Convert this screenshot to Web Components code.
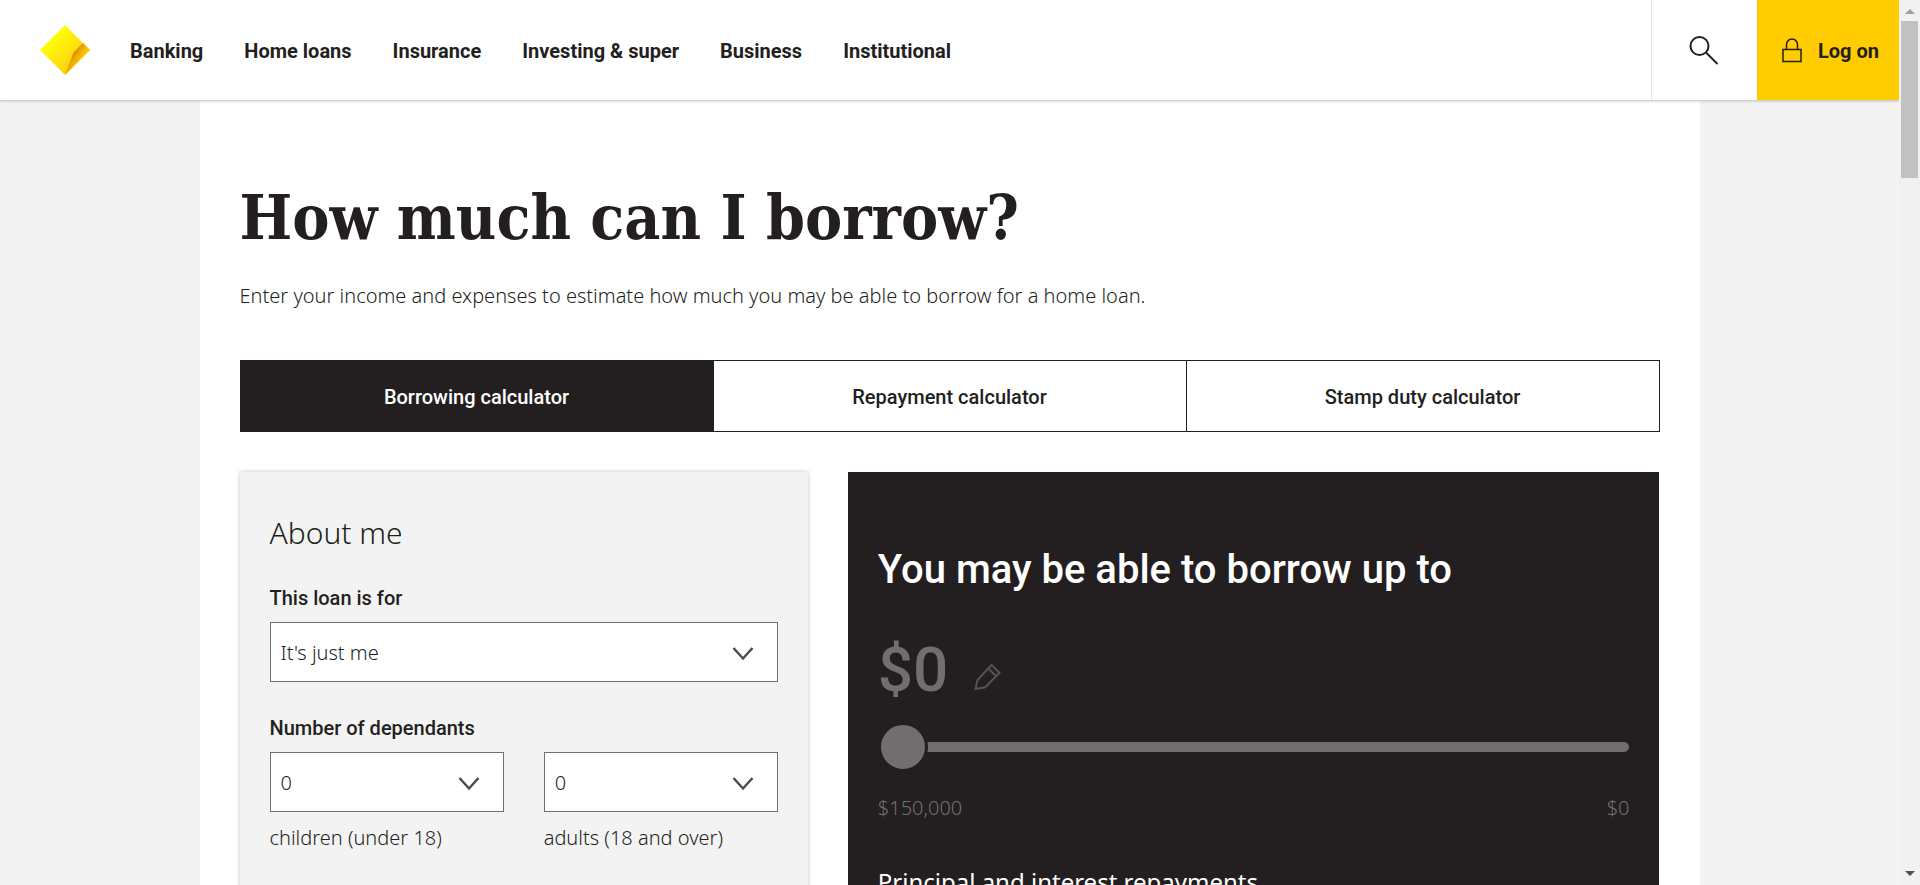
<!DOCTYPE html>
<html lang="en">
<head>
<meta charset="utf-8">
<title>How much can I borrow?</title>
<style>
  html, body { margin: 0; height: 100%; }
  body {
    --ink: #231f20;
    --mist: #f3f3f3;
    --sun: #fc0;
    --grey: #716e6f;
    --ui: Roboto, "Liberation Sans", sans-serif;
    --text: "Noto Sans", "Open Sans", sans-serif;
    font: 300 20px/28px var(--text);
    color: var(--ink);
  }
</style>
</head>
<body>
<app-shell>
  <site-header slot="header">
    <nav-link href="#banking">Banking</nav-link>
    <nav-link href="#home-loans">Home loans</nav-link>
    <nav-link href="#insurance">Insurance</nav-link>
    <nav-link href="#investing">Investing &amp; super</nav-link>
    <nav-link href="#business">Business</nav-link>
    <nav-link href="#institutional">Institutional</nav-link>
  </site-header>
  <page-intro>
    <span slot="title">How much can I borrow?</span>
    Enter your income and expenses to estimate how much you may be able to borrow for a home loan.
  </page-intro>
  <calc-tabs>
    <calc-tab selected>Borrowing calculator</calc-tab>
    <calc-tab>Repayment calculator</calc-tab>
    <calc-tab>Stamp duty calculator</calc-tab>
  </calc-tabs>
  <calc-columns>
    <about-form slot="form"></about-form>
    <borrow-result slot="result"></borrow-result>
  </calc-columns>
</app-shell>

<script>
function define(name, html, setup) {
  const template = document.createElement('template');
  template.innerHTML = html;
  customElements.define(name, class extends HTMLElement {
    connectedCallback() {
      if (this.shadowRoot) return;
      const root = this.attachShadow({ mode: 'open' });
      root.append(template.content.cloneNode(true));
      if (setup) setup(this, root);
    }
  });
}

/* Scrolling page beside its scroll bar */
define('app-shell', `
<style>
  :host { display: flex; height: 100vh; background: var(--mist); }
  .pane { flex: 1; min-width: 0; overflow-y: auto; scrollbar-width: none; }
  main { box-sizing: border-box; max-width: 1500px; margin: 0 auto; padding: 81px 40px; background: #fff; }
</style>
<div class="pane">
  <slot name="header"></slot>
  <main><slot></slot></main>
</div>
<scroll-rail></scroll-rail>`);

define('scroll-rail', `
<style>
  :host { display: flex; flex-direction: column; align-items: center; box-sizing: border-box; width: 21px; padding: 9px 2px; background: #f1f1f1; }
  svg { flex: none; display: block; }
  .rail { flex: 1; width: 17px; padding-top: 7px; }
  .thumb { height: 157px; background: #c1c1c1; }
</style>
<svg width="10" height="5" viewBox="0 0 10 5" aria-hidden="true"><path d="M5 0 10 5H0z" fill="#a0a0a0"/></svg>
<div class="rail"><div class="thumb"></div></div>
<svg width="10" height="5" viewBox="0 0 10 5" aria-hidden="true"><path d="M0 0H10L5 5z" fill="#505050"/></svg>`);

define('site-header', `
<style>
  :host { display: block; position: relative; z-index: 1; }
  header { display: flex; height: 100px; background: #fff; border-bottom: 1px solid #d0d0d0; box-shadow: 0 1px 2px rgba(0,0,0,.12); }
  .logo { display: flex; align-items: center; padding: 0 40px; }
  nav { display: flex; align-items: center; gap: 41px; flex: 1; }
  button { border: 0; background: none; color: var(--ink); cursor: pointer; }
  .search { width: 106px; padding: 0; border-left: 1px solid #e6e6e6; display: grid; place-items: center; }
  .logon { display: flex; align-items: center; gap: 16px; padding: 0 20px 0 25px; background: var(--sun); font: 700 20px/24px var(--ui); }
  .logon span { padding-top: 2px; }
  svg { display: block; }
</style>
<header>
  <a class="logo" href="#home" aria-label="Home">
    <svg width="50" height="50" viewBox="0 0 50 50">
      <defs>
        <linearGradient id="face" x1="12" y1="12" x2="38" y2="38" gradientUnits="userSpaceOnUse">
          <stop offset="0" stop-color="#ffff05"/><stop offset=".3" stop-color="#fff00d"/><stop offset="1" stop-color="#fdcf12"/>
        </linearGradient>
        <linearGradient id="fold" x1="31" y1="28" x2="41" y2="35" gradientUnits="userSpaceOnUse">
          <stop offset="0" stop-color="#c27a00"/><stop offset=".45" stop-color="#e9a400"/><stop offset="1" stop-color="#ffc900"/>
        </linearGradient>
      </defs>
      <path d="M25 0 50 25 25 50 0 25z" fill="url(#face)"/>
      <path d="M43 18 35 26Q33.600 27.500 33 29L25 50 50 25z" fill="url(#fold)"/>
    </svg>
  </a>
  <nav aria-label="Main"><slot></slot></nav>
  <button class="search" aria-label="Search">
    <svg width="30" height="30" viewBox="0 0 30 30" fill="none" stroke="#231f20" stroke-width="2"><circle cx="10.500" cy="11" r="9"/><path d="M17 17.500 28.500 29"/></svg>
  </button>
  <button class="logon">
    <svg width="20" height="26" viewBox="0 0 20 26" fill="none" stroke="#231f20" stroke-width="1.500" aria-hidden="true"><path d="M1 12.500H19V24.500H1zM4.500 12.500V7.500A5.500 5.500 0 0 1 15.500 7.500V12.500"/></svg>
    <span>Log on</span>
  </button>
</header>`);

define('nav-link', `
<style>
  :host { display: block; padding-top: 2px; font: 700 20px/24px var(--ui); }
  a { color: inherit; text-decoration: none; }
</style>
<a><slot></slot></a>`, (host, root) => { root.querySelector('a').href = host.getAttribute('href'); });

define('page-intro', `
<style>
  :host { display: block; margin-bottom: 50px; }
  h1 { margin: 0 0 28px; font: 700 62px/72px "DejaVu Serif Condensed", "DejaVu Serif", serif; }
  p { margin: 0; }
</style>
<h1><slot name="title"></slot></h1>
<p><slot></slot></p>`);

define('calc-tabs', `
<style>
  :host { display: grid; grid-template-columns: repeat(3, 1fr); gap: 1px; padding: 1px; background: var(--ink); margin-bottom: 40px; }
</style>
<slot></slot>`, host => host.setAttribute('role', 'tablist'));

define('calc-tab', `
<style>
  :host { display: grid; height: 70px; }
  button { border: 0; padding: 2px 0 0; background: #fff; color: var(--ink); font: 500 20px/24px var(--ui); cursor: pointer; }
  :host([selected]) button { background: var(--ink); color: #fff; }
</style>
<button role="tab"><slot></slot></button>`, (host, root) =>
  root.querySelector('button').setAttribute('aria-selected', host.hasAttribute('selected')));

define('calc-columns', `
<style>
  :host { display: grid; grid-template-columns: repeat(12, 1fr); gap: 40px; }
  .form { grid-column: span 5; display: grid; }
  .result { grid-column: span 7; display: grid; }
</style>
<div class="form"><slot name="form"></slot></div>
<div class="result"><slot name="result"></slot></div>`);

/* Drop-down with an optional label above it and an optional hint below it */
define('select-field', `
<style>
  :host { display: block; }
  label { display: block; }
  .label { margin-bottom: 12px; font: 500 20px/24px var(--ui); }
  .hint { margin-top: 12px; }
  .box { display: grid; position: relative; }
  select { appearance: none; box-sizing: border-box; width: 100%; height: 60px; padding: 1px 60px 0 10px; border: 1px solid #716e6f; border-radius: 0; background: #fff; color: inherit; font: 300 20px/28px var(--text); }
  svg { position: absolute; right: 24px; top: 24px; pointer-events: none; }
</style>
<label class="label" for="choice"></label>
<div class="box">
  <select id="choice"></select>
  <svg width="22" height="15" viewBox="0 0 22 15" fill="none" stroke="#4f4c4d" stroke-width="2.500" aria-hidden="true"><path d="M1.500 2 11 12.500 20.500 2"/></svg>
</div>
<label class="hint" for="choice"></label>`, (host, root) => {
  for (const part of ['label', 'hint']) {
    const el = root.querySelector('.' + part);
    if (host.hasAttribute(part)) el.textContent = host.getAttribute(part);
    else el.remove();
  }
  const select = root.querySelector('select');
  for (const text of host.getAttribute('options').split('|')) select.add(new Option(text));
});

define('about-form', `
<style>
  :host { display: block; padding: 41px 30px; background: var(--mist); box-shadow: 0 0 4px rgba(0,0,0,.25); }
  h2 { margin: 0 0 33px; font: 300 30px/40px var(--text); }
  fieldset { min-width: 0; margin: 34px 0 0; padding: 0; border: 0; }
  legend { padding: 0 0 12px; font: 500 20px/24px var(--ui); }
  .pair { display: grid; grid-template-columns: 1fr 1fr; gap: 40px; }
</style>
<h2>About me</h2>
<select-field label="This loan is for" options="It's just me"></select-field>
<fieldset>
  <legend>Number of dependants</legend>
  <div class="pair">
    <select-field options="0|1|2|3" hint="children (under 18)"></select-field>
    <select-field options="0|1|2|3" hint="adults (18 and over)"></select-field>
  </div>
</fieldset>`);

define('borrow-result', `
<style>
  :host { display: block; padding: 74px 30px 60px; background: var(--ink); color: #fff; }
  h2 { margin: 0 0 40px; font: 500 40px/48px var(--ui); }
  .amount { display: flex; align-items: flex-end; gap: 26px; color: var(--grey); font: 500 62px/72px var(--ui); }
  .amount button { padding: 0 0 15px; border: 0; background: none; }
  svg { display: block; }
  input { appearance: none; display: block; width: 100%; height: 50px; margin: 16px 0 22px; background: none; }
  input::-webkit-slider-runnable-track { height: 10px; border-radius: 5px; background: var(--grey); }
  input::-webkit-slider-thumb { appearance: none; box-sizing: border-box; width: 50px; height: 50px; margin-top: -20px; border: 3px solid var(--ink); border-radius: 50%; background: var(--grey); }
  .range { display: flex; justify-content: space-between; color: var(--grey); }
  h3 { margin: 44px 0 0; font: 400 24px/32px var(--text); }
</style>
<h2>You may be able to borrow up to</h2>
<div class="amount">
  <span>$0</span>
  <button aria-label="Edit amount">
    <svg width="27" height="28" viewBox="0 0 27 28" fill="none" stroke="#555253" stroke-width="2"><path d="M1.500 26 3.500 17 17.500 2 25.500 9.800 11.300 24.200zM14 5.300 22 13"/></svg>
  </button>
</div>
<input type="range" min="0" max="150000" value="0" disabled aria-label="Borrowing amount">
<div class="range"><span>$150,000</span><span>$0</span></div>
<h3>Principal and interest repayments</h3>`);
</script>
</body>
</html>
